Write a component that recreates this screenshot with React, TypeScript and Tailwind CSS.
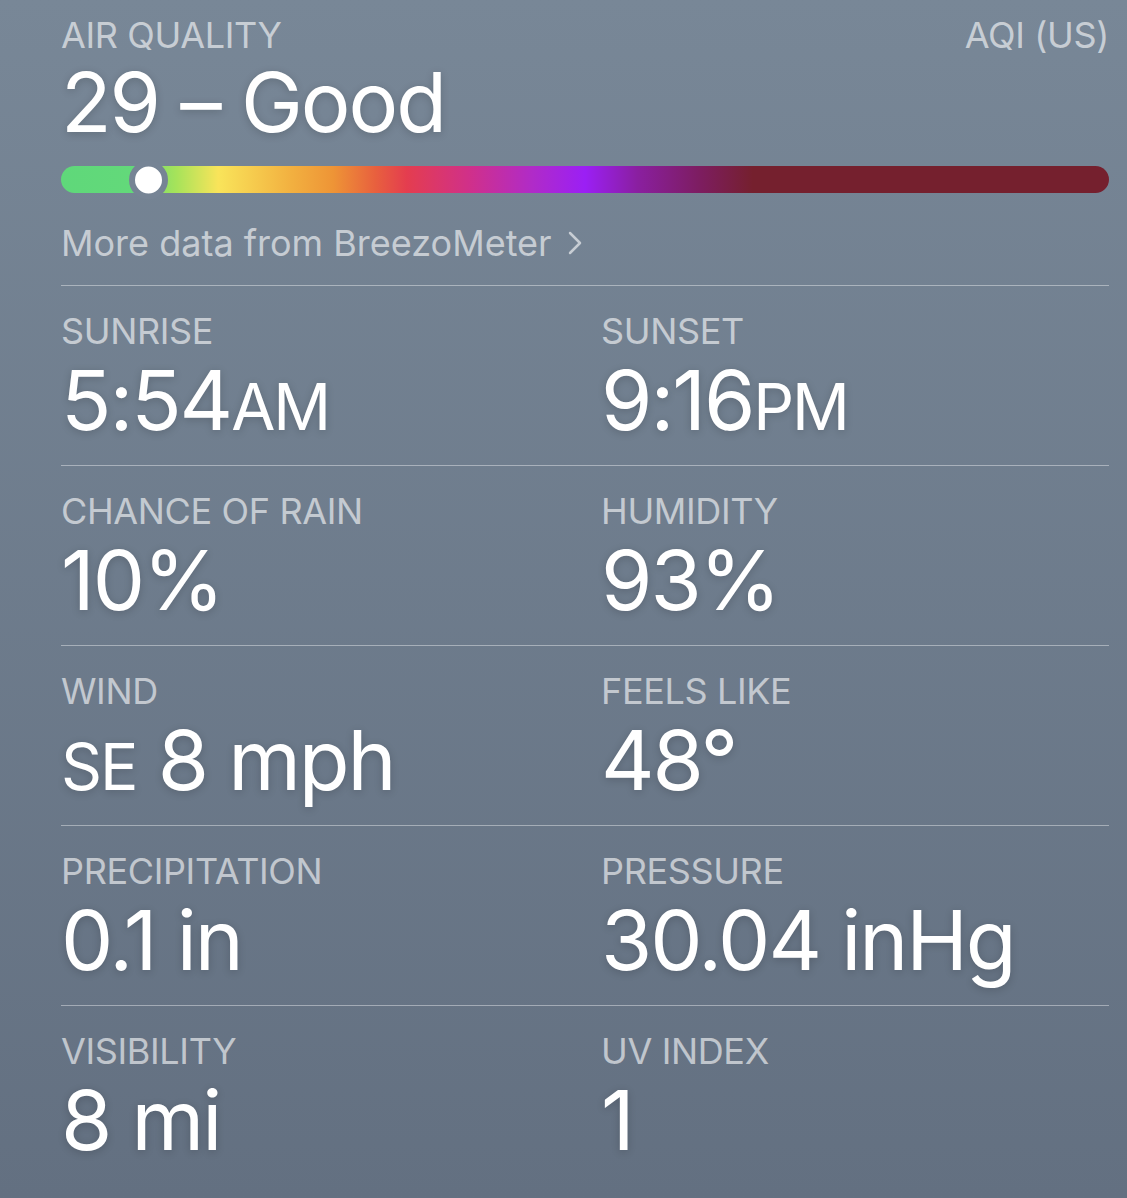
import React from "react";

type Cell = { label: string; value: React.ReactNode };

const rows: [Cell, Cell][] = [
  [
    { label: "SUNRISE", value: <>5:54<span className="text-[64px]">AM</span></> },
    { label: "SUNSET", value: <>9:16<span className="text-[64px]">PM</span></> },
  ],
  [
    { label: "CHANCE OF RAIN", value: "10%" },
    { label: "HUMIDITY", value: "93%" },
  ],
  [
    { label: "WIND", value: <><span className="text-[64px]">SE</span> 8 mph</> },
    { label: "FEELS LIKE", value: "48°" },
  ],
  [
    { label: "PRECIPITATION", value: "0.1 in" },
    { label: "PRESSURE", value: "30.04 inHg" },
  ],
  [
    { label: "VISIBILITY", value: "8 mi" },
    { label: "UV INDEX", value: "1" },
  ],
];

const shadow = "[text-shadow:0_2px_8px_rgba(0,0,0,0.18)]";

const DetailCell: React.FC<Cell> = ({ label, value }) => (
  <div className="flex flex-col">
    <div className="text-[36px] leading-none tracking-[-0.01em] text-white/60">{label}</div>
    <div className={`mt-[10px] text-[83px] leading-none tracking-[-0.025em] text-white whitespace-nowrap ${shadow}`}>
      {value}
    </div>
  </div>
);

export default function App() {
  return (
    <div className="w-[1127px] h-[1198px] overflow-hidden bg-[linear-gradient(to_bottom,#788797,#637081)] font-['Inter',sans-serif]">
      <div className="pl-[61px] pr-[18px]">
        {/* air quality */}
        <section className="pt-[17px] pb-[24px] border-b border-white/40">
          <div className="flex items-start justify-between text-[36px] leading-none tracking-[-0.01em] text-white/60">
            <span>AIR QUALITY</span>
            <span>AQI (US)</span>
          </div>
          <div className={`mt-[8px] text-[83px] leading-none tracking-[-0.025em] text-white ${shadow}`}>
            29 – Good
          </div>
          <div className="relative mt-[22px] h-[27px] rounded-full bg-[linear-gradient(to_right,#5fd87a_0%,#63d97a_7%,#a6e35a_11%,#f9e45a_15%,#f2b040_22%,#ee9436_26%,#e8603e_30%,#e43d4f_33%,#d0308a_39%,#b02bc8_45%,#9b1ff5_50%,#8a1fa0_55%,#7d1d60_61%,#75202e_66%,#75202e_100%)]">
            <div className="absolute left-[68px] top-1/2 -translate-y-1/2 h-[39px] w-[39px] rounded-full border-[6px] border-[#768495] bg-white" />
          </div>
          <div className="mt-[32px] flex items-center gap-[16px] text-[36px] leading-none text-white/60">
            <span>More data from BreezoMeter</span>
            <svg width="14" height="24" viewBox="0 0 14 24" fill="none" stroke="currentColor" strokeWidth="2.5" strokeLinecap="round" strokeLinejoin="round">
              <polyline points="2,2 12,12 2,22" />
            </svg>
          </div>
        </section>

        {rows.map(([a, b], i) => (
          <div
            key={i}
            className={`grid grid-cols-[540px_1fr] h-[180px] pt-[27px] ${i < rows.length - 1 ? "border-b border-white/40" : ""}`}
          >
            <DetailCell {...a} />
            <DetailCell {...b} />
          </div>
        ))}
      </div>
    </div>
  );
}
